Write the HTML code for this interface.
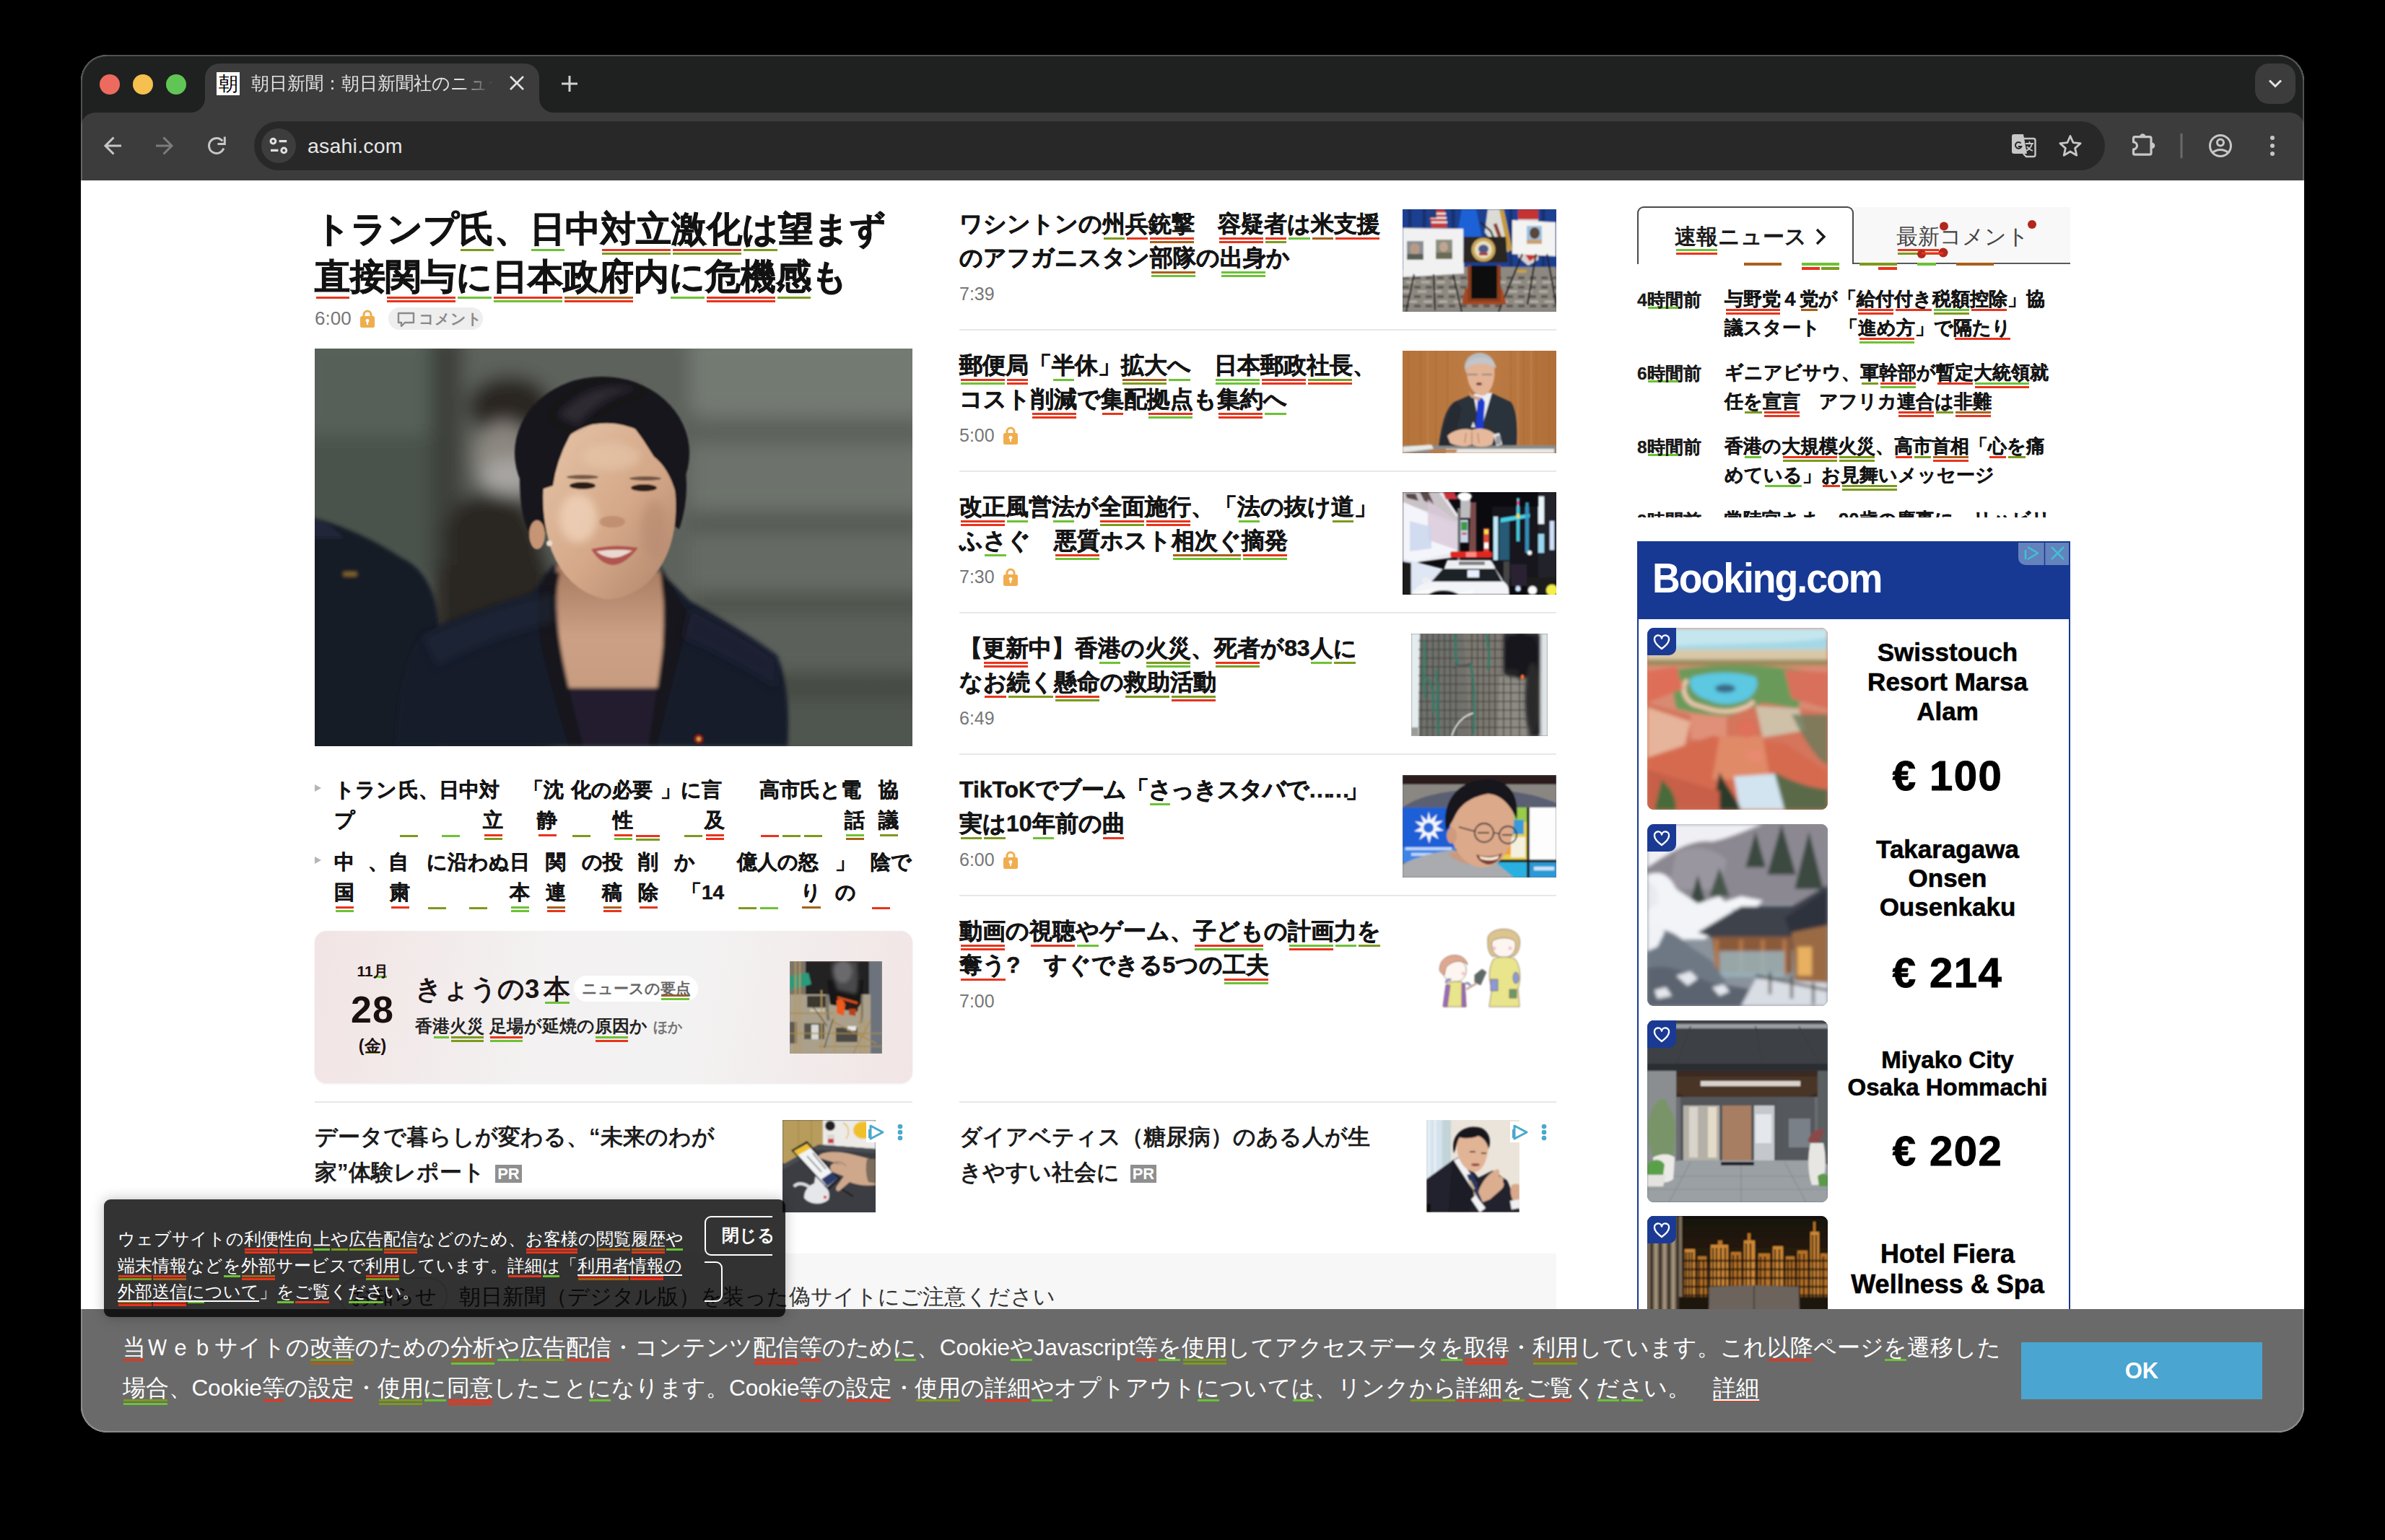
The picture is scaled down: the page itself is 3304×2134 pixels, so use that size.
<!DOCTYPE html>
<html lang="ja">
<head>
<meta charset="utf-8">
<title>asahi</title>
<style>
*{box-sizing:border-box;margin:0;padding:0}
html,body{width:3304px;height:2134px;background:#000;overflow:hidden}
body{font-family:"Liberation Sans",sans-serif;color:#111;position:relative}
.a{position:absolute}
#win{position:absolute;left:0;top:0;width:3304px;height:2134px;clip-path:inset(76px 112px 149px 112px round 36px);background:#fff}
#tabstrip{left:112px;top:76px;width:3080px;height:110px;background:#1f2020}
#toolbar{left:112px;top:156px;width:3080px;height:94px;background:#3c3c3c;border-radius:20px 20px 0 0}
#tab{left:284px;top:88px;width:463px;height:68px;background:#3c3c3c;border-radius:20px 20px 0 0}
.flare{width:20px;height:20px;top:136px;background:radial-gradient(circle at 0 0,#1f2020 19.5px,#3c3c3c 20.5px)}
.tl{width:28px;height:28px;border-radius:50%;top:103px}
#omni{left:352px;top:168px;width:2564px;height:68px;border-radius:34px;background:#282828}
#edge{left:112px;top:76px;width:3080px;height:1909px;border-radius:36px;box-shadow:inset 0 0 0 2px rgba(255,255,255,.22);pointer-events:none}

u{--c1:transparent;--c2:transparent;text-decoration:none;background-image:linear-gradient(var(--c1),var(--c1)),linear-gradient(var(--c2),var(--c2));background-size:calc(100% - 3px) 3.200px,calc(100% - 3px) 3.200px;background-position:50% calc(100% - 5.400px),50% calc(100% - .6px);background-repeat:no-repeat;padding-bottom:10px}
.r{--c1:#e8341c}.g{--c1:#6cc234}.o{--c1:#7c9a1c}.b{--c1:#a86018}
.r2{--c2:#e8341c}.g2{--c2:#6cc234}.o2{--c2:#7c9a1c}.b2{--c2:#a86018}
.lock{display:inline-block;vertical-align:-4px;margin-left:12px}
.hl{-webkit-text-stroke:.55px #141414;font-weight:bold;font-size:31.9px;line-height:47px;white-space:nowrap;color:#141414}
.tm{font-size:25px;color:#767676;line-height:30px;white-space:nowrap}

.sl{-webkit-text-stroke:.45px #141414;left:463px;font-size:28px;line-height:40px;font-weight:bold;white-space:nowrap;color:#141414;width:800px;height:40px}
.sl i{font-style:normal;position:absolute;top:0}
.sl i{margin-left:-463px}
.sl i.m{height:40px}
.sl u{padding-bottom:13px}
.sl i.m u{display:block;height:49px;padding:0}
.pr{display:inline-block;background:#8f8f8f;color:#fff;font-size:22px;line-height:25px;height:25px;padding:0 3px;margin-left:6px;vertical-align:1px;letter-spacing:0}

i.ul{position:absolute;top:2px;height:4px}
.nt{-webkit-text-stroke:.3px #1a1a1a;position:absolute;left:0;font-size:24.500px;line-height:40px;font-weight:bold;white-space:nowrap;color:#1a1a1a}
.nt u{padding-bottom:5px}
.nh{-webkit-text-stroke:.4px #141414;position:absolute;left:121px;font-size:25.600px;line-height:39.600px;font-weight:bold;white-space:nowrap;color:#141414}
.nh u{padding-bottom:9px}

#ck u{padding-bottom:7px}
#pop u{padding-bottom:7px;background-size:calc(100% - 2px) 3px,calc(100% - 2px) 3px;background-position:50% calc(100% - 4px),50% 100%}
.lk{text-decoration:underline;text-decoration-thickness:2px;text-underline-offset:4px}
.j{display:block;text-align:justify;text-align-last:justify;text-justify:inter-character;white-space:nowrap}
.sep{height:2px;background:#e8e8e8}
.th{overflow:hidden}
.th svg{display:block}
</style>
</head>
<body>
<div id="win">
<!-- ===== browser chrome ===== -->
<div class="a" id="tabstrip"></div>
<div class="a" id="toolbar"></div>
<div class="a" id="tab"></div>
<div class="a flare" style="left:264px"></div>
<div class="a flare" style="left:747px;transform:scaleX(-1)"></div>
<div class="a tl" style="left:138px;background:#ed6a5f"></div>
<div class="a tl" style="left:184px;background:#f5c04f"></div>
<div class="a tl" style="left:230px;background:#61c555"></div>
<div class="a" id="omni"></div>
<div class="a" style="left:300px;top:100px;width:32px;height:32px;background:#fff;color:#000;font-family:'Liberation Serif',serif;font-size:27px;line-height:32px;text-align:center;overflow:hidden">朝</div>
<div class="a" style="left:348px;top:99px;width:340px;height:34px;overflow:hidden;white-space:nowrap;font-size:24.5px;line-height:34px;color:#e3e3e3;-webkit-mask-image:linear-gradient(90deg,#000 290px,transparent 335px);mask-image:linear-gradient(90deg,#000 290px,transparent 335px)" id="tabt"><span class="j" style="width:379px">朝日新聞：朝日新聞社のニュース</span></div>
<svg class="a" style="left:112px;top:76px" width="3080" height="174" viewBox="112 76 3080 174" fill="none" stroke="#c7c7c7" stroke-width="3" stroke-linecap="butt" stroke-linejoin="miter">
<path d="M707 106l18 18M725 106l-18 18" stroke="#e3e3e3" stroke-width="2.6"/>
<path d="M778 116h22M789 105v22" stroke="#d0d0d0" stroke-width="3"/>
<path d="M168 202h-22M157.500 190.500L146 202l11.500 11.500"/>
<path d="M216 202h22M226.500 190.500L238 202l-11.500 11.500" stroke="#7c7c7c"/>
<path d="M308.300 195.500A10.500 10.500 0 1 0 309.900 205.600"/><path d="M311.300 189.500v10h-9.800"/>
<circle cx="386" cy="202" r="24" fill="#3d3d3d" stroke="none"/>
<circle cx="378.400" cy="195.600" r="3.400" stroke="#e0e0e0" stroke-width="3"/><path d="M386.600 195.600h10.600" stroke="#e0e0e0" stroke-width="3.200"/>
<circle cx="393.300" cy="208.400" r="3.400" stroke="#e0e0e0" stroke-width="3"/><path d="M375 208.400h10.400" stroke="#e0e0e0" stroke-width="3.200"/>
<rect x="3124" y="88" width="56" height="56" rx="19" fill="#3c3c3c" stroke="none"/>
<path d="M3144 111.500l8 8 8-8" stroke="#e3e3e3" stroke-width="3"/>
<!-- translate -->
<path d="M2790 186h13l5 27h-18a3 3 0 0 1-3-3v-21a3 3 0 0 1 3-3z" fill="#c7c7c7" stroke="none"/>
<path d="M2803 192h14a2.500 2.500 0 0 1 2.500 2.500v20a2.500 2.500 0 0 1-2.500 2.500h-10l-4-4" stroke-width="2.400"/>
<path d="M2806 199h11M2811.500 196v3M2815 199c-1 5-4 8-8 10M2808 203c2 3 5 5 8 6" stroke-width="1.800"/>
<path d="M2799.500 198.500a4.300 4.300 0 1 0 .8 4.500h-4.500" stroke="#282828" stroke-width="2"/>
<!-- star -->
<path d="M2868 188.500l4.100 9.200 10 1-7.500 6.700 2.200 9.800-8.800-5.200-8.800 5.200 2.200-9.800-7.500-6.700 10-1z" stroke-width="2.800" stroke-linejoin="round"/>
<!-- puzzle -->
<path d="M2957.500 189.700h20.500a2 2 0 0 1 2 2v20.500a2 2 0 0 1-2 2h-20.500a2 2 0 0 1-2-2v-5.400a5 5 0 0 0 0-10v-5.100a2 2 0 0 1 2-2z" stroke-width="3.200" stroke-linejoin="round"/><path d="M2964 189.500a4.300 4.300 0 0 1 8.600 0zM2981 197.500a4.300 4.300 0 0 1 0 8.600z" fill="#c7c7c7" stroke="none"/>
<path d="M3022 186v32" stroke="#6a6a6a" stroke-width="3" stroke-linecap="round"/>
<circle cx="3076" cy="202" r="14.500" stroke-width="3"/><circle cx="3076" cy="197.500" r="4.500" stroke-width="3"/><path d="M3065.500 211.500c5-5.500 16-5.500 21 0" stroke-width="3"/>
<g fill="#c7c7c7" stroke="none"><circle cx="3148" cy="191" r="3"/><circle cx="3148" cy="202" r="3"/><circle cx="3148" cy="213" r="3"/></g>
</svg>
<div class="a" style="left:426px;top:182px;font-size:28.5px;line-height:40px;color:#e6e6e6;letter-spacing:.2px">asahi.com</div>
<!--CHROME-ICONS-->
<!-- ===== page ===== -->
<div class="a jx" style="left:436px;top:284px;font-size:49px;line-height:66px;font-weight:bold;white-space:nowrap;color:#121212;-webkit-text-stroke:.9px #121212"><span class="j" style="width:791px">トランプ<u class="o">氏</u>、<u class="g">日</u>中<u class="r o2">対立</u><u class="r o2">激化</u><u class="o">は</u>望まず</span><span class="j" style="width:738px"><u class="r">直</u>接<u class="r r2">関与</u><u class="g">に</u><u class="r g2">日本</u><u class="b r2">政府</u>内<u class="g">に</u><u class="r r2">危機</u><u class="o">感</u>も</span></div>
<div class="a tm" style="left:436px;top:426px;font-size:26px">6:00<svg class="lock" width="20" height="25" viewBox="0 0 20 25"><path d="M5 10V7a5 5 0 0 1 10 0v3" fill="none" stroke="#f0ad4e" stroke-width="3"/><rect x="0" y="9" width="20" height="16" rx="2.500" fill="#f0ad4e"/><circle cx="10" cy="15.500" r="2.400" fill="#fff"/><rect x="9" y="16" width="2" height="5" fill="#fff"/></svg></div>
<div class="a" style="left:538px;top:426px;width:131px;height:31px;border-radius:16px;background:#eeeeee;font-size:21px;line-height:31px;color:#8a8a8a;padding-left:42px;white-space:nowrap;font-weight:bold" id="cmt"><span class="j" style="width:88px">コメント</span></div>
<svg class="a" style="left:550px;top:432px" width="26" height="22" viewBox="0 0 26 22" fill="none" stroke="#8a8a8a" stroke-width="2.400" stroke-linejoin="round"><path d="M2 2h21v13H11l-5 5v-5H2z"/></svg>
<div class="a th" id="p-main" style="left:436px;top:483px;width:828px;height:551px;background:#5d625b"><svg width="828" height="551" viewBox="0 0 828 551">
<defs>
<filter id="b12" x="-10%" y="-10%" width="120%" height="120%"><feGaussianBlur stdDeviation="12"/></filter>
<filter id="b6" x="-10%" y="-10%" width="120%" height="120%"><feGaussianBlur stdDeviation="6"/></filter>
<filter id="b3" x="-10%" y="-10%" width="120%" height="120%"><feGaussianBlur stdDeviation="2.500"/></filter>
<filter id="b1" x="-10%" y="-10%" width="120%" height="120%"><feGaussianBlur stdDeviation="1.200"/></filter>
<linearGradient id="mbg" x1="0" y1="0" x2="0" y2="1"><stop offset="0" stop-color="#6b7169"/><stop offset=".5" stop-color="#666b64"/><stop offset="1" stop-color="#4b504a"/></linearGradient>
<linearGradient id="mface" x1="0" y1="0" x2="1" y2="1"><stop offset="0" stop-color="#e6c4a8"/><stop offset=".55" stop-color="#d4a888"/><stop offset="1" stop-color="#b0846a"/></linearGradient>
<linearGradient id="mneck" x1="0" y1="0" x2="0" y2="1"><stop offset="0" stop-color="#a77a60"/><stop offset=".4" stop-color="#cca084"/><stop offset="1" stop-color="#c2977c"/></linearGradient>
</defs>
<rect width="828" height="551" fill="url(#mbg)"/>
<g filter="url(#b12)">
<rect x="-20" y="-20" width="190" height="300" fill="#566058"/>
<rect x="-20" y="120" width="190" height="200" fill="#4a524b"/>
<rect x="160" y="-20" width="50" height="600" fill="#3d403a"/>
<rect x="205" y="-20" width="330" height="600" fill="#5d625b"/>
<rect x="520" y="-20" width="330" height="110" fill="#737a72"/>
<rect x="520" y="100" width="330" height="34" fill="#5c615b"/>
<rect x="520" y="134" width="330" height="90" fill="#6d736c"/>
<rect x="520" y="226" width="330" height="30" fill="#555a54"/>
<rect x="520" y="256" width="330" height="80" fill="#666b65"/>
<rect x="520" y="338" width="330" height="30" fill="#4d524c"/>
<rect x="520" y="368" width="330" height="80" fill="#5b605a"/>
<rect x="520" y="450" width="330" height="34" fill="#454943"/>
<rect x="520" y="484" width="330" height="90" fill="#50554f"/>
<ellipse cx="270" cy="80" rx="58" ry="42" fill="#2b2522"/>
<ellipse cx="262" cy="150" rx="40" ry="48" fill="#8b8680"/>
<ellipse cx="268" cy="178" rx="36" ry="26" fill="#a8a6a2"/>
<path d="M180 250 Q200 190 260 200 Q330 210 330 400 L180 400z" fill="#2a2622"/>
<rect x="170" y="300" width="160" height="300" fill="#2a2824"/>
</g>
<g filter="url(#b3)">
<path d="M-10 232 Q60 250 120 290 Q165 310 172 380 L172 560 L-10 560z" fill="#191b27"/>
<path d="M-10 232 Q20 240 40 262 L-10 262z" fill="#22263a"/>
<rect x="40" y="310" width="18" height="5" fill="#8a6a2a"/>
</g>
<g filter="url(#b3)">
<path d="M112 551 Q118 430 150 395 Q200 370 300 340 L330 300 L480 310 L520 350 Q600 395 640 425 Q660 470 655 551z" fill="#191b2a"/>
<path d="M335 300 Q330 380 352 470 L372 551 L470 551 L478 470 Q486 380 482 310z" fill="url(#mneck)"/>
<path d="M352 470 L478 470 L474 551 L368 551z" fill="#211f2d"/>
<path d="M318 312 Q300 360 318 430 Q336 500 352 551 L372 551 Q350 470 338 400 Q330 350 340 310z" fill="#13141f"/>
<path d="M478 300 Q500 340 520 372 Q500 440 474 551 L462 551 Q480 440 486 380z" fill="#13141f"/>
</g>
<g filter="url(#b1)">
<ellipse cx="398" cy="145" rx="121" ry="106" fill="#16131a"/>
<path d="M285 150 Q280 230 300 260 L330 250 L320 150z" fill="#16131a"/>
<path d="M505 130 Q525 190 505 250 L488 240 L490 140z" fill="#16131a"/>
<path d="M318 180 Q330 120 385 105 Q450 95 490 150 Q505 200 498 250 Q490 300 455 330 Q425 350 400 347 Q350 335 328 280 Q312 230 318 180z" fill="url(#mface)"/>
<path d="M330 190 Q340 120 400 60 Q440 100 470 150 Q490 165 500 200 Q505 120 440 50 L370 45 Q300 80 300 200z" fill="#16131a"/>
<ellipse cx="308" cy="258" rx="11" ry="20" fill="#c69576"/>
<ellipse cx="371" cy="190" rx="18" ry="5" fill="#2a1a16"/>
<ellipse cx="456" cy="193" rx="18" ry="5" fill="#2a1a16"/>
<ellipse cx="371" cy="178" rx="22" ry="3" fill="#4a3328" opacity=".7"/>
<ellipse cx="458" cy="180" rx="22" ry="3" fill="#4a3328" opacity=".7"/>
<path d="M383 278 Q415 270 448 276 Q430 300 412 300 Q395 298 383 278z" fill="#b0544f"/>
<path d="M390 281 Q415 277 440 280 Q425 290 412 290 Q400 289 390 281z" fill="#ead9d0"/>
<ellipse cx="412" cy="240" rx="18" ry="8" fill="#b98468" opacity=".7"/>
<circle cx="325" cy="270" r="4" fill="#e8e0d0"/>
<g filter="url(#b6)"><ellipse cx="365" cy="235" rx="26" ry="34" fill="#f0d4bc" opacity=".75"/><ellipse cx="410" cy="150" rx="40" ry="18" fill="#e8c8ac" opacity=".6"/><ellipse cx="470" cy="250" rx="18" ry="40" fill="#b88a70" opacity=".6"/><path d="M335 92 Q385 38 450 56 Q400 64 364 108z" fill="#34303a" opacity=".8"/><path d="M150 400 Q260 350 330 340 L330 380 Q240 400 170 440z" fill="#262b40" opacity=".45"/><path d="M520 360 Q600 400 640 430 L640 470 Q580 430 510 400z" fill="#262b40" opacity=".4"/></g>
<circle cx="532" cy="541" r="7" fill="#8a1f1a"/><circle cx="532" cy="541" r="3" fill="#c9a040"/>
</g>
</svg></div>
<!-- sub links (layout broken by extension in the original) -->
<div class="a" style="left:436px;top:1087px;width:0;height:0;border-left:9px solid #b5b5b5;border-top:5.500px solid transparent;border-bottom:5.500px solid transparent"></div>
<div class="a" style="left:436px;top:1187px;width:0;height:0;border-left:9px solid #b5b5b5;border-top:5.500px solid transparent;border-bottom:5.500px solid transparent"></div>
<div class="a sl" style="top:1075px">トラン<i style="left:552px"><span class="j" style="width:140px">氏、日中対</span></i><i style="left:725px"><span class="j" style="width:56px">「沈</span></i><i style="left:791px"><span class="j" style="width:113px">化の必要</span></i><i style="left:915px"><span class="j" style="width:85px">」に言</span></i><i style="left:1052px"><span class="j" style="width:141px">高市氏と電</span></i><i style="left:1217px"><span class="j" style="width:28px">協</span></i></div>
<div class="a sl" style="top:1117px">プ<i class="m" style="left:552px;width:28px" ><u class="o"></u></i><i class="m" style="left:610px;width:28px"><u class="g"></u></i><i style="left:669px"><span class="j" style="width:28px"><u class="r o2">立</u></span></i><i style="left:744px"><span class="j" style="width:28px"><u class="r">静</u></span></i><i class="m" style="left:791px;width:28px"><u class="o"></u></i><i style="left:849px"><span class="j" style="width:28px"><u class="r g2">性</u></span></i><i class="m" style="left:879px;width:36px"><u class="r o2"></u></i><i class="m" style="left:946px;width:28px"><u class="o"></u></i><i style="left:976px"><span class="j" style="width:28px"><u class="r r2">及</u></span></i><i class="m" style="left:1052px;width:28px"><u class="r"></u></i><i class="m" style="left:1082px;width:28px"><u class="o"></u></i><i class="m" style="left:1112px;width:28px"><u class="o"></u></i><i style="left:1170px"><span class="j" style="width:28px"><u class="g b2">話</u></span></i><i style="left:1217px"><span class="j" style="width:28px"><u class="o">議</u></span></i></div>
<div class="a sl" style="top:1175px">中<i style="left:510px"><span class="j" style="width:56px">、自</span></i><i style="left:591px"><span class="j" style="width:143px">に沿わぬ日</span></i><i style="left:756px"><span class="j" style="width:28px">関</span></i><i style="left:806px"><span class="j" style="width:57px">の投</span></i><i style="left:884px"><span class="j" style="width:28px">削</span></i><i style="left:934px"><span class="j" style="width:29px">か</span></i><i style="left:1021px"><span class="j" style="width:113px">億人の怒</span></i><i style="left:1157px"><span class="j" style="width:28px">」</span></i><i style="left:1206px"><span class="j" style="width:57px">陰で</span></i></div>
<div class="a sl" style="top:1217px"><u class="r g2">国</u><i style="left:540px"><span class="j" style="width:28px"><u class="r">粛</u></span></i><i class="m" style="left:591px;width:28px"><u class="o"></u></i><i class="m" style="left:648px;width:28px"><u class="o"></u></i><i style="left:706px"><span class="j" style="width:28px"><u class="g g2">本</u></span></i><i style="left:756px"><span class="j" style="width:28px"><u class="b r2">連</u></span></i><i style="left:834px"><span class="j" style="width:28px"><u class="b r2">稿</u></span></i><i style="left:884px"><span class="j" style="width:28px"><u class="r">除</u></span></i><i style="left:944px"><span class="j" style="width:59.2px">「14</span></i><i class="m" style="left:1021px;width:28px"><u class="o"></u></i><i class="m" style="left:1051px;width:28px"><u class="g"></u></i><i style="left:1109px"><span class="j" style="width:29px"><u class="b">り</u></span></i><i style="left:1157px"><span class="j" style="width:29px">の</span></i><i class="m" style="left:1206px;width:28px"><u class="r"></u></i></div>
<!-- kyou no 3 bon -->
<div class="a" style="left:436px;top:1290px;width:828px;height:211px;border-radius:16px;background:linear-gradient(100deg,#f2e4e4 0%,#f3f1f1 38%,#f3f2f2 62%,#f2e5e5 100%);box-shadow:0 1px 3px rgba(0,0,0,.08)"></div>
<div class="a" style="left:466px;top:1330px;width:100px;text-align:center;font-weight:bold;color:#1a1010">
<div style="font-size:21px;line-height:32px">11<u class="g" style="padding-bottom:4px">月</u></div>
<div style="font-size:52px;line-height:70px;margin-top:2px;letter-spacing:1px">28</div>
<div style="font-size:23px;line-height:32px;margin-top:-1px">(<u class="o" style="padding-bottom:4px">金</u>)</div>
</div>
<div class="a jx" style="left:575px;top:1343px;font-size:36.500px;line-height:56px;font-weight:bold;white-space:nowrap;color:#1a1414"><span class="j" style="width:215.4px">きょうの3<u class="g" style="padding-bottom:6px;margin-left:6px">本</u></span></div>
<div class="a" style="left:795px;top:1352px;width:172px;height:36px;border-radius:18px;background:#fff;font-size:20.500px;line-height:36px;font-weight:bold;color:#666;text-align:center;white-space:nowrap">ニュースの<u class="b g2" style="padding-bottom:6px">要点</u></div>
<div class="a jx" style="left:575px;top:1404px;font-size:23.800px;line-height:36px;font-weight:bold;white-space:nowrap;color:#222"><span class="j" style="width:370.3px">香<u class="g">港</u><u class="o o2">火災</u> <u class="r g2">足場</u>が延焼の<u class="g r2">原因</u>か <span style="font-size:20px;color:#777;margin-left:2px">ほか</span></span></div>
<div class="a th" id="p-fire2" style="left:1094px;top:1332px;width:128px;height:128px;background:#6d675d"><svg width="128" height="128" viewBox="0 0 128 128">
<rect width="128" height="128" fill="#a79d8a"/>
<g filter="url(#b1)">
<rect x="0" y="0" width="112" height="46" fill="#202022"/>
<rect x="110" y="0" width="18" height="128" fill="#6d737c"/>
<path d="M0 0h22v46H0z" fill="#7a7466"/>
<path d="M0 20l26-4 4 16-30 8z" fill="#2c9a7c"/>
<path d="M0 60l14-6 2 6-16 8z" fill="#d0603a"/>
<path d="M52 26h50l-2 36-12 4-30-6z" fill="#161616"/>
<path d="M0 46h112v82H0z" fill="#aaa08c"/>
<path d="M52 46c2 12-2 22 2 36M100 46c-2 14 2 24-2 40" stroke="#5a564e" stroke-width="4" opacity=".6"/>
<rect x="24" y="48" width="26" height="16" fill="#3a3833"/><rect x="28" y="66" width="20" height="4" fill="#c9c3b4"/>
<rect x="20" y="86" width="28" height="22" fill="#55524a"/><rect x="30" y="88" width="10" height="20" fill="#d9d9d6"/>
<rect x="64" y="92" width="30" height="20" fill="#4c4a44"/><rect x="80" y="90" width="12" height="6" fill="#e8e8e8"/>
<rect x="0" y="84" width="10" height="30" fill="#5c5a54"/>
<path d="M52 28h48l-2 34-10 4-32-6z" fill="#171717"/>
<path d="M64 52h18l14 6-2 12-28-4z" fill="#2a1a14"/>
<path d="M65 54c6-4 10 0 12 6l-2 16-10-4z" fill="#ee5a1c"/>
<path d="M82 66h10l-1 10-9-2z" fill="#b8401c"/>
<path d="M66 50l28 8" stroke="#d8501e" stroke-width="3"/>
<path d="M8 0v128M14 0v128M44 40v88M62 70v58M98 60v68M104 80v48" stroke="#b89a5a" stroke-width="1.800"/>
<path d="M0 72h60M0 100h128M40 118h88M60 84l60 30M88 128l24-46" stroke="#a88a4a" stroke-width="1.600"/>
<path d="M60 80l-12 40M30 60l22 30" stroke="#3a3a36" stroke-width="1.200"/>
</g>
<g filter="url(#b3)"><path d="M60 0c-6 14 2 26 6 40l26 6c6-16 0-30 2-46z" fill="#4a4a4c"/><ellipse cx="74" cy="14" rx="12" ry="16" fill="#6a6a6c"/></g>
</svg></div>
<div class="a sep" style="left:436px;top:1526px;width:828px"></div>
<div class="a sep" style="left:1329px;top:1526px;width:827px"></div>
<div class="a jx" style="left:436px;top:1551px;font-size:31px;line-height:49px;font-weight:bold;white-space:nowrap;color:#1c1c1c"><span class="j" style="width:553.5px">データで暮らしが変わる、“未来のわが</span><span class="j" style="width:286.7px">家”体験レポート <span class="pr">PR</span></span></div>
<div class="a th" id="p-ad1" style="left:1084px;top:1552px;width:129px;height:128px;background:#555"><svg width="129" height="128" viewBox="0 0 129 128">
<rect width="129" height="128" fill="#3b3e43"/>
<g filter="url(#b1)">
<rect width="58" height="60" fill="#b79c5c"/>
<path d="M22 0v50M40 0v44" stroke="#a88c4c" stroke-width="1.500"/>
<rect x="56" width="73" height="44" fill="#ecebe8"/>
<circle cx="66" cy="8" r="7" fill="#222"/>
<rect x="62" y="20" width="10" height="18" fill="#d8d8d6"/><rect x="63" y="26" width="8" height="6" fill="#d03a3a"/>
<ellipse cx="112" cy="14" rx="14" ry="12" fill="#f0c02a"/>
<path d="M84 4c8 4 10 14 4 22" stroke="#e8b84a" stroke-width="1.500" fill="none"/>
<path d="M0 62l50-28 79 6v88H0z" fill="#3a3d42"/>
<path d="M0 62l50-28 79 6v6l-79-5-50 28z" fill="#4a4d52"/>
<!-- stand -->
<path d="M30 108c0-12 8-18 14-20l4-24 12 2-2 26c6 4 8 10 6 18-8 8-26 8-34-2z" fill="#e6e7ea"/>
<path d="M16 92c6-6 16-4 22 2" stroke="#e0e0e4" stroke-width="4" fill="none"/>
<circle cx="59" cy="107" r="2.200" fill="#e8302a"/>
<!-- phone -->
<path d="M12 42l22-13 46 52-16 16z" fill="#1c1d22"/>
<path d="M16 43l18-10 42 48-14 12z" fill="#f2f4f6"/>
<path d="M16 43l18-10 5 6-18 10z" fill="#f0c02a"/>
<path d="M54 82l15-10 7 9-14 11z" fill="#2a3a6a"/>
<path d="M34 50l20 22M42 46l18 22" stroke="#555" stroke-width="1.200"/>
<path d="M76 92l22 14" stroke="#222" stroke-width="2.500"/>
<!-- hand -->
<path d="M52 48c10-6 30-4 46 0l31 8v34c-12 2-26 0-36-4l-14 12c-4 2-6-2-4-6l10-14-16-6c-6-6-2-12 4-12l10 2-28-8c-6-2-6-4-3-6z" fill="#cfa88c"/>
<path d="M70 60c6-4 14-2 18 4" stroke="#a8806a" stroke-width="1.500" fill="none"/>
<path d="M117 54h12v34l-10-2c-4-10-4-22-2-32z" fill="#7c6c5c"/>
</g></svg></div>
<div class="a jx" style="left:1329px;top:1551px;font-size:31px;line-height:49px;font-weight:bold;white-space:nowrap;color:#1c1c1c"><span class="j" style="width:569px">ダイアベティス（糖尿病）のある人が生</span><span class="j" style="width:273.2px">きやすい社会に <span class="pr">PR</span></span></div>
<div class="a th" id="p-ad2" style="left:1976px;top:1552px;width:129px;height:128px;background:#ccd"><svg width="129" height="128" viewBox="0 0 129 128">
<rect width="129" height="128" fill="#ebe4da"/>
<g filter="url(#b1)">
<rect width="34" height="128" fill="#d4e2ec"/><rect x="22" width="12" height="128" fill="#c2d4d8"/>
<path d="M4 0v128M12 0v128" stroke="#e8f0f8" stroke-width="3"/>
<!-- suit -->
<path d="M0 82l36-26 12-6 24 30 20-10 20 14 17 40v4H0z" fill="#23242f"/>
<path d="M38 56l8-4 24 36-6 8z" fill="#f2f2f4"/>
<path d="M56 76l8-2 14 34-8 4z" fill="#2a3560"/><path d="M60 84l6 12M64 98l6 10" stroke="#c9b48a" stroke-width="3"/>
<path d="M36 56l30 44-6 28H30z" fill="#1d1e28"/>
<rect x="0" y="116" width="6" height="12" fill="#111"/>
<!-- head -->
<path d="M42 34c0-20 14-26 28-24 14 2 18 14 16 28-2 18-8 32-18 34-14 0-26-16-26-38z" fill="#e2b496"/>
<path d="M38 46c-6-30 20-42 40-34 10 6 12 18 8 28-2-10-8-16-14-18-8 4-20 4-26 2-4 6-4 14-8 22z" fill="#17151a"/>
<path d="M60 44h8M76 46h7" stroke="#3a2a24" stroke-width="1.800"/>
<ellipse cx="68" cy="62" rx="6" ry="2" fill="#9a4a40"/>
<!-- hands -->
<path d="M72 100c4-14 14-26 26-32 4 2 4 6 2 10 4 0 8 2 6 8 2 2 2 6-2 10l-16 14-10 4z" fill="#dcae90"/>
<path d="M68 104l14 18-8 6-12-18z" fill="#f4f4f6"/>
<path d="M118 90c4-2 8-2 11 0v22l-8 2c-4-8-6-16-3-24z" fill="#d9a88c"/>
<path d="M116 112l13-2v12l-11 2z" fill="#f0f0f2"/>
</g></svg></div>
<svg class="a" style="left:1198px;top:1552px" width="70" height="34" viewBox="0 0 70 34"><rect x="2" y="2" width="14" height="29" fill="#fff"/><path d="M8 8l17 9-17 9z" fill="#fff" stroke="#4aa8cc" stroke-width="3" stroke-linejoin="round"/><path d="M6.500 13v12" stroke="#4aa8cc" stroke-width="3"/><g fill="#4aa8cc"><circle cx="49" cy="9" r="3.300"/><circle cx="49" cy="17" r="3.300"/><circle cx="49" cy="25" r="3.300"/></g></svg>
<svg class="a" style="left:2090px;top:1552px" width="70" height="34" viewBox="0 0 70 34"><rect x="2" y="2" width="14" height="29" fill="#fff"/><path d="M8 8l17 9-17 9z" fill="#fff" stroke="#4aa8cc" stroke-width="3" stroke-linejoin="round"/><path d="M6.500 13v12" stroke="#4aa8cc" stroke-width="3"/><g fill="#4aa8cc"><circle cx="49" cy="9" r="3.300"/><circle cx="49" cy="17" r="3.300"/><circle cx="49" cy="25" r="3.300"/></g></svg>

<div class="a" style="left:436px;top:1737px;width:1720px;height:80px;background:#f7f7f7"></div>
<div class="a" style="left:470px;top:1770px;width:150px;height:52px;border-radius:26px;border:2px solid #ddd;font-size:29px;line-height:48px;text-align:center;color:#333;white-space:nowrap">お知らせ</div>
<div class="a jx" style="left:636px;top:1775px;font-size:30px;line-height:44px;color:#333;white-space:nowrap"><span class="j" style="width:826px">朝日新聞（デジタル版）を装った偽サイトにご注意ください</span></div>
<div class="a hl jx" style="left:1329px;top:287px"><span class="j" style="width:583px">ワシントンの<u class="o">州</u><u class="r">兵</u><u class="r b2">銃撃</u>　<u class="r r2">容疑</u><u class="r o2">者</u><u class="g">は</u><u class="b">米</u><u class="r">支援</u></span><span class="j" style="width:458px">のアフガニスタン<u class="b g2">部隊</u>の<u class="g g2">出身</u>か</span></div>
<div class="a tm" style="left:1329px;top:392px">7:39</div>
<div class="a sep" style="left:1329px;top:456px;width:827px"></div>
<div class="a hl jx" style="left:1329px;top:483px"><span class="j" style="width:577px"><u class="r g2">郵便</u><u class="r r2">局</u>「<u class="g">半</u>休」<u class="b o2">拡大</u><u class="g">へ</u>　<u class="g g2">日本</u><u class="r r2">郵政</u><u class="o r2">社長</u>、</span><span class="j" style="width:454px">コスト<u class="r r2">削減</u>で<u class="r">集</u>配<u class="r g2">拠点</u>も<u class="r r2">集約</u><u class="g">へ</u></span></div>
<div class="a tm" style="left:1329px;top:588px">5:00<svg class="lock" width="20" height="25" viewBox="0 0 20 25"><path d="M5 10V7a5 5 0 0 1 10 0v3" fill="none" stroke="#f0ad4e" stroke-width="3"/><rect x="0" y="9" width="20" height="16" rx="2.500" fill="#f0ad4e"/><circle cx="10" cy="15.500" r="2.400" fill="#fff"/><rect x="9" y="16" width="2" height="5" fill="#fff"/></svg></div>
<div class="a sep" style="left:1329px;top:652px;width:827px"></div>
<div class="a hl jx" style="left:1329px;top:679px"><span class="j" style="width:579px"><u class="r r2">改正</u><u class="g">風</u>営<u class="g">法</u>が<u class="r o2">全面</u><u class="r r2">施行</u>、「<u class="g">法</u>の抜け<u class="o">道</u>」</span><span class="j" style="width:455px">ふ<u class="g">さ</u>ぐ　<u class="r g2">悪質</u>ホスト<u class="b g2">相次ぐ</u><u class="r g2">摘発</u></span></div>
<div class="a tm" style="left:1329px;top:784px">7:30<svg class="lock" width="20" height="25" viewBox="0 0 20 25"><path d="M5 10V7a5 5 0 0 1 10 0v3" fill="none" stroke="#f0ad4e" stroke-width="3"/><rect x="0" y="9" width="20" height="16" rx="2.500" fill="#f0ad4e"/><circle cx="10" cy="15.500" r="2.400" fill="#fff"/><rect x="9" y="16" width="2" height="5" fill="#fff"/></svg></div>
<div class="a sep" style="left:1329px;top:848px;width:827px"></div>
<div class="a hl jx" style="left:1329px;top:875px"><span class="j" style="width:550.5px">【<u class="r r2">更新</u>中】香<u class="g">港</u>の<u class="o g2">火災</u>、<u class="r o2">死者</u>が83<u class="g">人</u><u class="o">に</u></span><span class="j" style="width:356px">な<u class="r">お</u><u class="o">続く</u><u class="r o2">懸命</u>の<u class="o">救助</u><u class="o r2">活動</u></span></div>
<div class="a tm" style="left:1329px;top:980px">6:49</div>
<div class="a sep" style="left:1329px;top:1044px;width:827px"></div>
<div class="a hl jx" style="left:1329px;top:1071px"><span class="j" style="width:566.1px">TikToK<span style="letter-spacing:-1.3px">でブーム「<u class="g">さ</u>っきスタバで<span style="letter-spacing:-6px">……</span>」</span></span><span class="j" style="width:229.5px"><u class="o">実</u><u class="o">は</u>10<u class="g">年</u>前の<u class="r">曲</u></span></div>
<div class="a tm" style="left:1329px;top:1176px">6:00<svg class="lock" width="20" height="25" viewBox="0 0 20 25"><path d="M5 10V7a5 5 0 0 1 10 0v3" fill="none" stroke="#f0ad4e" stroke-width="3"/><rect x="0" y="9" width="20" height="16" rx="2.500" fill="#f0ad4e"/><circle cx="10" cy="15.500" r="2.400" fill="#fff"/><rect x="9" y="16" width="2" height="5" fill="#fff"/></svg></div>
<div class="a sep" style="left:1329px;top:1240px;width:827px"></div>
<div class="a hl jx" style="left:1329px;top:1267px"><span class="j" style="width:584px"><u class="r r2">動画</u>の<u class="r">視聴</u><u class="g">や</u>ゲーム、<u class="r g2">子ども</u>の<u class="g r2">計画</u><u class="g">力</u><u class="o">を</u></span><span class="j" style="width:429.3px"><u class="r">奪う</u>?　すぐできる5つの<u class="r g2">工夫</u></span></div>
<div class="a tm" style="left:1329px;top:1372px">7:00</div>
<div class="a th" id="p-t1" style="left:1943px;top:290px;width:213px;height:142px;background:#6b6f80"><svg width="213" height="142" viewBox="0 0 213 142">
<rect width="213" height="84" fill="#1d3f8e"/>
<g filter="url(#b1)">
<path d="M0 0h213v84H0z" fill="#1e4191"/>
<path d="M10 0v84M30 0v84M70 0v84M150 0v84M195 0v84" stroke="#17336f" stroke-width="5"/>
<rect y="80" width="213" height="62" fill="#8d8880"/>
<path d="M0 95h213M0 108h213M0 121h213M0 134h213" stroke="#5f5b56" stroke-width="4" stroke-dasharray="9 7"/>
<path d="M5 101h213M0 114h213M8 128h213" stroke="#b5b0a8" stroke-width="3" stroke-dasharray="12 9"/>
<!-- flags -->
<path d="M36 0h22l4 26H40z" fill="#c43a3a"/><path d="M38 6h22M39 12h22M40 18h22" stroke="#eee" stroke-width="2.500"/><rect x="36" y="0" width="11" height="12" fill="#283a7a"/>
<path d="M82 0h20l8 40-12 4-22-10z" fill="#1f62d6"/>
<path d="M118 0h22l12 56-14 6-24-30z" fill="#dcdcd6"/><path d="M140 0l12 56-6 3-12-59z" fill="#c79a3a"/><path d="M128 20l8 22" stroke="#8a3a2a" stroke-width="5"/>
<path d="M160 0h28v70l-14 8-14-12z" fill="#d9d3d0"/><path d="M160 0h28v14h-28zM160 28h28v12h-28zM164 54h24v10l-12 8z" fill="#c53030"/>
<!-- boards -->
<path d="M0 26l84 1 1 62-85 5z" fill="#f1f1f1"/>
<path d="M152 15l60 3v47l-60-3z" fill="#f3f3f1"/>
<rect x="6" y="44" width="23" height="26" fill="#8a8d92"/><ellipse cx="17" cy="55" rx="7" ry="8" fill="#b59a88"/><rect x="6" y="62" width="23" height="8" fill="#595e55"/>
<rect x="46" y="42" width="23" height="27" fill="#8b8e80"/><ellipse cx="57" cy="52" rx="6" ry="7" fill="#c0a590"/><rect x="46" y="60" width="23" height="9" fill="#6a6b55"/>
<rect x="172" y="23" width="21" height="25" fill="#9cc0e0"/><ellipse cx="183" cy="33" rx="7" ry="8" fill="#5a4638"/><rect x="172" y="42" width="21" height="6" fill="#c9a070"/>
<!-- easel legs -->
<path d="M16 90L5 142M43 90l2 50M70 90l12 52M166 62l-33 80M185 62l-12 70M200 62l13 70" stroke="#1a1a1a" stroke-width="2.200"/>
<!-- podium -->
<path d="M82 132l4-22h52l6 22z" fill="#a54a22"/>
<path d="M90 128V78h46v50z" fill="#8c3c1a"/>
<rect x="95" y="78" width="36" height="46" fill="#0a0a0c"/>
<path d="M85 38h58l3 36H84z" fill="#2a2623"/>
<circle cx="112" cy="56" r="16.500" fill="#c9a85a"/><circle cx="112" cy="56" r="12" fill="#e9dfc0"/><ellipse cx="112" cy="55" rx="7" ry="6" fill="#4a5a8a"/><path d="M106 60h12v4h-12z" fill="#b03a3a"/>
<path d="M108 18l14 12 6 14" stroke="#222" stroke-width="2.500" fill="none"/>
<rect x="158" y="84" width="14" height="4" rx="2" fill="#c9a23a"/>
</g></svg></div>
<div class="a th" id="p-t2" style="left:1943px;top:486px;width:213px;height:142px;background:#b5763f"><svg width="213" height="142" viewBox="0 0 213 142">
<defs><linearGradient id="wood" x1="0" y1="0" x2="1" y2="0"><stop offset="0" stop-color="#b5733c"/><stop offset=".5" stop-color="#bd7c44"/><stop offset="1" stop-color="#b06f3a"/></linearGradient></defs>
<rect width="213" height="142" fill="url(#wood)"/>
<g filter="url(#b1)">
<path d="M8 0v142M25 0v142M46 0v142M62 0v142M150 0v142M168 0v142M185 0v142M203 0v142" stroke="#a96a35" stroke-width="1.500" opacity=".7"/>
<path d="M35 0v142M160 0v142M178 0v142" stroke="#c58a52" stroke-width="2" opacity=".6"/>
<rect y="131" width="213" height="11" fill="#8a8a88"/>
<path d="M0 133l40-3 3 6-43 5zM60 136h150v6H60z" fill="#e8e8e6"/>
<path d="M36 137h40l-2 4H38z" fill="#c07a2a"/>
<!-- body -->
<path d="M50 132c4-30 10-56 24-62l26-11 24 0 26 12c8 10 10 40 8 60z" fill="#2c303a"/>
<path d="M98 60l10 52 16-54z" fill="#eef0f4"/>
<path d="M104 68l6-3 4 6-3 46-6 5-4-8z" fill="#1a3bd0"/>
<path d="M74 70c-10 10-18 40-22 60l20 2c2-20 6-40 10-52z" fill="#262a33"/>
<!-- head -->
<ellipse cx="107" cy="22" rx="21" ry="19" fill="#b9bcc0"/>
<path d="M89 28c0-14 36-16 38-2 2 14-4 32-14 36-12 2-24-12-24-34z" fill="#e2b395"/>
<path d="M86 24c2-18 40-22 44 0-10-8-30-8-44 0z" fill="#c2c5c9"/>
<path d="M90 33h14M110 33h14" stroke="#777" stroke-width="1.500"/>
<ellipse cx="106" cy="46" rx="4" ry="2" fill="#7a3a30"/>
<path d="M92 56c4 6 10 8 16 8l-2 6-12-6z" fill="#cfa084"/>
<!-- hands -->
<path d="M62 118c8-8 24-12 34-8 10-4 24-2 32 6l-4 14c-10 4-20 4-28 0-10 4-22 2-30-2z" fill="#e6b99c"/>
<path d="M96 112v18M88 114l-2 14M104 114l2 14" stroke="#b98a70" stroke-width="1.500"/>
<path d="M126 116l8-2 4 16-8 2z" fill="#e8e8ea"/><rect x="129" y="118" width="7" height="12" rx="2" fill="#9a9da2"/>
<path d="M95 106l3-8 3 8z" fill="#dfe3ee"/>
</g></svg></div>
<div class="a th" id="p-t3" style="left:1943px;top:682px;width:213px;height:142px;background:#555"><svg width="213" height="142" viewBox="0 0 213 142">
<rect width="213" height="142" fill="#0b0b0f"/>
<g filter="url(#b1)">
<!-- left billboards -->
<path d="M0 0h56l20 30v60L0 100z" fill="#e9eaf0"/>
<path d="M0 0h50l26 36-2 6L0 14z" fill="#c9c2c6"/><path d="M4 2h14l4 10-16-4zM24 0h12l8 18-14-6z" fill="#5a4a48"/>
<path d="M2 14l72 34v34L2 100z" fill="#f4f5fa"/>
<path d="M35 10l40 30v40l-40-14z" fill="#d9c8d8" opacity=".8"/>
<path d="M10 40l30 8v30l-30 4z" fill="#c9d6ee" opacity=".8"/>
<path d="M0 92l55 14v36H0z" fill="#dfe6f4"/>
<path d="M0 96l12 2v44H0z" fill="#1a1a1e"/>
<path d="M56 0h16l4 10H60z" fill="#c8323a"/>
<!-- pole + P sign -->
<rect x="76" y="22" width="3.500" height="78" fill="#777"/>
<rect x="80" y="8" width="14" height="28" fill="#bcbcc0"/>
<rect x="80" y="38" width="11" height="32" fill="#c8d4e8"/><rect x="81" y="41" width="9" height="12" fill="#3a9a4a"/><rect x="82" y="56" width="7" height="3" fill="#d03a3a"/>
<path d="M94 14h8v70h-10z" fill="#7a4a48"/>
<ellipse cx="86" cy="6" rx="10" ry="6" fill="#fff"/>
<!-- right buildings -->
<rect x="124" y="20" width="64" height="100" fill="#17191f"/>
<rect x="188" y="0" width="25" height="120" fill="#22242a"/>
<rect x="112" y="50" width="8" height="40" fill="#e04a3a"/><rect x="113" y="52" width="6" height="6" fill="#f4e050"/><rect x="113" y="70" width="6" height="8" fill="#fff"/>
<rect x="126" y="34" width="6" height="60" fill="#bfe8f8"/>
<rect x="134" y="40" width="14" height="54" fill="#2a6a8a" opacity=".8"/>
<path d="M136 36l40-6v5l-40 7z" fill="#4ad0e8"/>
<rect x="158" y="8" width="4" height="60" fill="#4ac8e0"/><rect x="158" y="12" width="4" height="6" fill="#e84a8a"/><rect x="158" y="30" width="4" height="6" fill="#f0e04a"/>
<rect x="170" y="14" width="5" height="70" fill="#3a9ac8" opacity=".9"/>
<rect x="188" y="6" width="8" height="38" fill="#e8f4fa"/><rect x="188" y="58" width="8" height="26" fill="#9ad8f0"/>
<rect x="204" y="40" width="6" height="40" fill="#cfe0f8"/>
<rect x="140" y="96" width="8" height="40" fill="#444"/><circle cx="176" cy="84" r="3" fill="#fff"/>
<circle cx="163" cy="104" r="3" fill="#e8304a"/>
<rect x="150" y="100" width="22" height="30" fill="#2a2030"/>
<!-- street bottom right -->
<rect x="172" y="118" width="41" height="24" fill="#1a1a1a"/>
<circle cx="180" cy="136" r="6" fill="#fff"/><circle cx="207" cy="136" r="8" fill="#f4f04a"/><circle cx="160" cy="134" r="4" fill="#cfe4ff"/>
<!-- police car -->
<path d="M12 142c6-12 20-18 36-22l12-18h66l14 22c6 4 8 10 8 18z" fill="#f2f4f8"/>
<path d="M58 104l4-10h60l6 10z" fill="#eceef2"/>
<rect x="78" y="96" width="36" height="5" fill="#333" opacity=".6"/>
<rect x="66" y="82" width="58" height="9" rx="3" fill="#e02820"/><rect x="88" y="83" width="14" height="7" fill="#ff8a80"/>
<path d="M40 124l16-18h72l10 18z" fill="#1d2026"/>
<rect x="90" y="108" width="16" height="10" fill="#e8f0ff"/>
<path d="M14 142c8-6 22-8 36-8l22 6 26-4v6z" fill="#fafafa"/>
<path d="M36 142c10-8 30-8 42 0z" fill="#15151a"/>
<ellipse cx="32" cy="122" rx="6" ry="4" fill="#eee"/>
</g></svg></div>
<div class="a th" id="p-t4" style="left:1955px;top:878px;width:189px;height:142px;background:#777"><svg width="189" height="142" viewBox="0 0 189 142">
<rect width="189" height="142" fill="#73716c"/>
<g filter="url(#b1)">
<rect width="12" height="142" fill="#e4ecee"/>
<rect x="176" width="13" height="142" fill="#dfe5e6"/>
<path d="M12 0h60l4 48-10 94H10z" fill="#6f716c"/>
<path d="M72 0h58v62l-8 80H80l-4-94z" fill="#7b7871"/>
<path d="M122 60l22-4 16 6v80h-40z" fill="#8d8a83"/>
<path d="M14 0v142M22 0v142M30 0v142M38 0v142M46 0v142M54 0v142M62 0v142M84 0v142M92 0v142M100 0v142M108 0v142M116 0v142M128 60v82M138 58v84M150 60v82" stroke="#3d3d3b" stroke-width="1.600" opacity=".75"/>
<path d="M10 10h120M10 22h120M10 34h120M10 46h120M10 58h120M10 70h150M10 82h150M10 94h150M10 106h150M10 118h150M10 130h150" stroke="#45443f" stroke-width="2" opacity=".6"/>
<path d="M18 10c2 30-4 50 2 80M34 50c6 30 0 60 4 90M60 0c4 20-2 30 6 46M82 40c4 20 8 50 4 100M104 0c2 16 6 30 2 50M20 60c10 6 12 30 10 50" stroke="#2f7d68" stroke-width="3.500" fill="none" opacity=".85"/>
<path d="M58 48c8-6 16-2 24-6" stroke="#555" stroke-width="3" fill="none"/>
<!-- smoke -->
</g>
<g filter="url(#b3)">
<path d="M128 0h50v142h-14V60l-20-6-16 2z" fill="#1f1f21"/>
<ellipse cx="152" cy="30" rx="24" ry="32" fill="#19191b"/>
<ellipse cx="168" cy="90" rx="10" ry="50" fill="#2a2a2c"/>
<ellipse cx="140" cy="54" rx="10" ry="6" fill="#222"/>
</g>
<g filter="url(#b1)">
<ellipse cx="154" cy="60" rx="2.500" ry="3.500" fill="#ff6a2a"/>
<path d="M56 142c6-18 16-28 30-32" stroke="#e8eef0" stroke-width="2" fill="none"/>
<rect x="0" y="130" width="10" height="12" fill="#9a9c98"/>
</g></svg></div>
<div class="a th" id="p-t5" style="left:1943px;top:1074px;width:213px;height:142px;background:#567"><svg width="213" height="142" viewBox="0 0 213 142">
<rect width="213" height="142" fill="#6d7078"/>
<g filter="url(#b1)">
<rect width="213" height="13" fill="#2a1f1c"/>
<path d="M0 13h213v32H0z" fill="#8a8682"/>
<path d="M0 45c40-30 150-34 213-6v8H0z" fill="#5a6072"/>
<rect x="0" y="45" width="72" height="76" fill="#1c5ed6"/>
<rect x="0" y="100" width="72" height="21" fill="#3a86e8"/>
<path d="M36 50l3 12 9-8-4 11 12-2-9 8 10 6-12 1 5 11-10-6-3 12-4-12-10 7 5-11-12-1 10-6-9-8 12 2-4-11 9 8z" fill="#f4f8ff"/>
<circle cx="36" cy="73" r="7" fill="#2a6ad8"/>
<rect x="4" y="100" width="64" height="4" fill="#dfe8ff" opacity=".8"/><rect x="12" y="108" width="30" height="4" fill="#dfe8ff" opacity=".8"/>
<rect x="128" y="45" width="44" height="72" fill="#e8d04a"/>
<rect x="128" y="45" width="44" height="20" fill="#9acb4a"/>
<rect x="150" y="62" width="18" height="20" fill="#3a9ad8"/><rect x="150" y="86" width="20" height="28" fill="#f4f0e0"/><rect x="134" y="92" width="16" height="18" fill="#f4a02a"/>
<rect x="176" y="45" width="37" height="72" fill="#fdfdfd"/>
<rect x="172" y="45" width="4" height="97" fill="#1a1a1e"/><rect x="120" y="117" width="93" height="4" fill="#1a1a1e"/>
<rect x="120" y="121" width="52" height="21" fill="#2ab0e0"/><rect x="176" y="121" width="37" height="21" fill="#2a9ad8"/>
<rect x="182" y="127" width="28" height="5" fill="#e8f4ff" opacity=".85"/>
<!-- shirt -->
<path d="M0 124c20-12 50-18 70-20l60 18 24 20H0z" fill="#a9abae"/>
<path d="M62 108c10 14 40 22 66 10l-6-16z" fill="#c99a80"/>
<!-- head -->
<path d="M66 70c0-40 20-52 50-52 28 0 40 18 38 50-2 34-16 58-42 60-24 0-46-24-46-58z" fill="#dca98a"/>
<path d="M60 78c-6-40 14-70 56-72 34 0 46 24 42 56-8-22-24-36-40-36-22 4-38 14-46 32-4 8-8 14-12 20z" fill="#17141a"/>
<ellipse cx="68" cy="84" rx="7" ry="11" fill="#d09a7c"/>
<circle cx="113" cy="80" r="13" fill="none" stroke="#2a2a2e" stroke-width="1.800"/><circle cx="146" cy="83" r="12" fill="none" stroke="#2a2a2e" stroke-width="1.800"/><path d="M126 80l8 1M100 78l-22-6" stroke="#2a2a2e" stroke-width="1.600"/>
<path d="M104 80h16M138 83h14" stroke="#3a2a24" stroke-width="2"/>
<path d="M102 110c12 4 24 4 36-2-4 12-12 16-20 16-8-2-14-6-16-14z" fill="#7a3a30"/>
<path d="M106 112c10 3 20 3 28-1l-2 5c-8 3-16 3-24 0z" fill="#f4ecd8"/>
</g></svg></div>
<div class="a th" id="p-t6" style="left:1991px;top:1279px;width:118px;height:125px;background:#fff"><svg width="118" height="120" viewBox="0 0 118 120">
<g filter="url(#b1)" stroke="#7a5a48" stroke-width=".8">
<!-- mother -->
<path d="M70 22c0-16 40-20 44 0 2 14-4 22-8 24l-30 0c-6-6-6-14-6-24z" fill="#dcc48e"/>
<path d="M76 26c4-6 26-8 32 0 2 10-2 20-14 22-12 0-20-8-18-22z" fill="#fdf6f0"/>
<path d="M78 50c8-4 22-4 30 0 8 10 8 30 4 40l2 26H72l4-26c-6-12-4-30 2-40z" fill="#e9e58c"/>
<path d="M74 78h10v16H74z" fill="#8a9ad8"/><path d="M100 92h10v12h-10z" fill="#6a9a6a"/><ellipse cx="109" cy="76" rx="4" ry="8" fill="#8a9ad8"/>
<circle cx="79" cy="35" r="2.500" fill="#f4c0d0" stroke="none"/><circle cx="101" cy="35" r="2.500" fill="#f4c0d0" stroke="none"/>
<!-- girl -->
<path d="M8 62c2-14 28-16 32 0 2 12-6 20-16 20-10 0-18-8-16-20z" fill="#fdf6f0"/>
<path d="M4 60c2-18 34-22 38-2-8-8-22-6-30 4l-2 10c-6-2-8-8-6-12z" fill="#e0a890"/>
<path d="M14 84c6-4 18-4 24 0l2 32H10z" fill="#e9e58c"/>
<path d="M12 86h6l-4 30h-6zM34 84h4l2 32h-6z" fill="#9a6ac0"/>
<path d="M12 84c-2-6 4-8 8-6M38 84c4-4 8 0 10 4" fill="#8a9ad8"/>
<path d="M40 92l14-8" stroke="#c9a890" stroke-width="3"/>
<path d="M52 72l10-8 6 4-8 18-8-4z" fill="#5a6a6a"/>
<circle cx="36" cy="70" r="2.500" fill="#f4c0d0" stroke="none"/>
</g></svg></div>
<div class="a" style="left:2568px;top:287px;width:300px;height:79px;background:#f8f8f8;border-bottom:2px solid #5a5a5a"></div>
<div class="a" style="left:2268px;top:286px;width:300px;height:80px;border:2px solid #4a4a4a;border-bottom:none;border-radius:9px 9px 0 0;background:#fff"></div>
<div class="a jx" style="left:2320px;top:306px;font-size:30px;line-height:44px;font-weight:bold;white-space:nowrap;color:#1a1a1a"><span class="j" style="width:183px"><u class="g r2">速報</u>ニュース</span></div>
<svg class="a" style="left:2512px;top:314px" width="22" height="28" viewBox="0 0 22 28" fill="none" stroke="#1a1a1a" stroke-width="3.400"><path d="M5 4l10 10-10 10"/></svg>
<div class="a jx" style="left:2627px;top:306px;font-size:30px;line-height:44px;white-space:nowrap;color:#444"><span class="j" style="width:184px"><u class="r o2">最新</u>コメント</span></div>
<svg class="a" style="left:2640px;top:296px" width="200" height="70" viewBox="2640 296 200 70"><g fill="#b3261e"><circle cx="2693" cy="313.500" r="6"/><circle cx="2815" cy="311" r="6"/><circle cx="2662" cy="352" r="6"/><circle cx="2692" cy="350" r="6.500"/></g><path d="M2662 351h30" stroke="#e8341c" stroke-width="3"/></svg>
<div class="a" style="left:2268px;top:362px;width:600px;height:14px;overflow:hidden"><i class="ul" style="left:148px;width:52px;background:#a86018"></i><i class="ul" style="left:228px;width:52px;background:#6cc234"></i><i class="ul" style="left:228px;top:8px;width:25px;background:#e8341c"></i><i class="ul" style="left:255px;top:8px;width:25px;background:#7c9a1c"></i><i class="ul" style="left:308px;width:52px;background:#7c9a1c"></i><i class="ul" style="left:334px;top:8px;width:26px;background:#e8341c"></i><i class="ul" style="left:388px;width:26px;background:#6cc234"></i><i class="ul" style="left:442px;width:52px;background:#a86018"></i></div>
<div class="a" id="newslist" style="left:2268px;top:380px;width:600px;height:337px;overflow:hidden">
<div class="nt jx" style="top:16px"><span class="j" style="width:88.7px">4<u class="g">時間</u>前</span></div>
<div class="nh jx" style="top:15px"><span class="j" style="width:444px"><u class="r r2">与野党</u>４<u class="b">党</u>が「<u class="r r2">給付</u><u class="r">付き</u><u class="g o2">税額</u><u class="r">控除</u>」協</span><span class="j" style="width:397px">議スタート　「<u class="r g2">進め方</u>」で<u class="r">隔たり</u></span></div>
<div class="nt jx" style="top:118px"><span class="j" style="width:88.7px">6<u class="g">時間</u>前</span></div>
<div class="nh jx" style="top:117px"><span class="j" style="width:449px">ギニアビサウ、<u class="o">軍</u><u class="r g2">幹部</u>が<u class="r">暫定</u><u class="g r2">大統領</u>就</span><span class="j" style="width:370px">任<u class="o">を</u><u class="r r2">宣言</u>　アフリカ<u class="r r2">連合</u><u class="o">は</u><u class="b r2">非難</u></span></div>
<div class="nt jx" style="top:220px"><span class="j" style="width:88.7px">8<u class="g">時間</u>前</span></div>
<div class="nh jx" style="top:219px"><span class="j" style="width:444px">香<u class="g">港</u>の<u class="r o2">大規模</u><u class="o o2">火災</u>、<u class="r">高</u><u class="o">市</u><u class="b r2">首相</u>「<u class="r">心</u><u class="o">を</u>痛</span><span class="j" style="width:374px">めて<u class="g">いる</u>」<u class="r">お</u><u class="o o2">見舞い</u>メッセージ</span></div>
<div class="nt jx" style="top:322px"><span class="j" style="width:88.7px">9<u class="g">時間</u>前</span></div>
<div class="nh jx" style="top:321px"><span class="j" style="width:452.5px">常陸宮さま、90歳の慶事に　リハビリ</span></div>
</div>
<div class="a" id="bk" style="left:2268px;top:750px;width:600px;height:1100px;border:2px solid #173993;border-radius:0;background:#fff;overflow:hidden">
<div class="a" style="left:-2px;top:-2px;width:600px;height:108px;background:#173993"></div>
<div class="a" style="left:19px;top:14px;font-size:58px;line-height:70px;font-weight:bold;color:#fff;letter-spacing:-2.200px;white-space:nowrap;transform:scaleX(.925);transform-origin:0 0" id="bklogo">Booking.com</div>
<svg class="a" style="left:526px;top:-2px" width="72" height="33" viewBox="0 0 72 33"><path d="M0 0h72v33H10A10 10 0 0 1 0 23z" fill="#7f9bc9" opacity=".75"/><path d="M36.500 0v33" stroke="#1a3a94" stroke-width="1.500"/><path d="M13 8l14 8.500-14 8.500" fill="none" stroke="#3ec0d8" stroke-width="2.600" stroke-linejoin="round"/><path d="M10 12v13" stroke="#3ec0d8" stroke-width="2.600"/><path d="M46 8l17 17M63 8l-17 17" stroke="#3ec0d8" stroke-width="2.600"/></svg>
<div class="a th" id="p-h1" style="left:12px;top:118px;width:250px;height:252px;border-radius:9px;background:#999"><svg class="a" style="left:0;top:0" width="250" height="252" viewBox="0 0 250 252">
<rect width="250" height="252" fill="#d67a62"/>
<g filter="url(#b3)">
<rect width="250" height="44" fill="#a4d8e6"/>
<path d="M0 0h250v14c-60 10-160 6-250 14z" fill="#c4e6ee"/>
<path d="M0 30h250v18H0z" fill="#d9c8a8"/>
<path d="M0 44h250v12H0z" fill="#9a8a5a"/>
<path d="M0 52h250v80H0z" fill="#d98a72"/>
<path d="M30 60c40-10 130-12 190 0l-10 50c-50 16-120 16-170 2z" fill="#6a9a5a"/>
<path d="M62 68c30-8 60-8 88 0 6 10 0 22-10 30-20 10-40 10-56 2-20-6-30-20-22-32z" fill="#5cc8e2"/>
<ellipse cx="108" cy="84" rx="14" ry="6" fill="#3a6a8a"/>
<path d="M56 72c-10 8-6 26 8 34l20 6c20 6 40 4 56-4l8-6" stroke="#f0c8b0" stroke-width="6" fill="none"/>
<path d="M0 60l40-6 10 30-50 20z" fill="#de6e58"/>
<path d="M190 58l60 4v50l-50-14z" fill="#d8705c"/>
<path d="M0 104l70 20 40 0 50-20 90 14v134H0z" fill="#d4745c"/>
<path d="M0 110l60 20-10 40-50 10z" fill="#e6b49a"/>
<path d="M150 108l60 4 10 30-60 10z" fill="#cfc0a8"/>
<path d="M60 120l50 4v36l-50-6z" fill="#e09078"/>
<path d="M0 180l90-30 100 10 60 40v52H0z" fill="#d66a50"/>
<path d="M100 150h60l10 60h-80z" fill="#e08a68"/>
<ellipse cx="138" cy="140" rx="12" ry="12" fill="#e0705a"/>
<ellipse cx="148" cy="178" rx="12" ry="8" fill="#e88a70"/>
<path d="M120 206l60-4 10 50h-62z" fill="#d2e4f0"/>
<path d="M100 200c10 20 20 30 30 52H90z" fill="#2a3a2a"/>
<path d="M176 200c20 10 40 20 74 24v28h-60z" fill="#5a6a4a"/>
<path d="M200 120c10 20 30 60 50 70v-70z" fill="#6a7a5a" opacity=".8"/>
<path d="M0 196l100 30v26H0z" fill="#c8604a"/>
<path d="M20 210c10 10 20 20 20 42H10z" fill="#4a6a3a"/>
</g></svg><svg class="a" style="left:0;top:0" width="40" height="38" viewBox="0 0 40 38"><path d="M0 8a8 8 0 0 1 8-8h32v28a10 10 0 0 1-10 10H0z" fill="#1a3a94"/><path d="M20 29c-6-4.500-10-8-10-12.500a5 5 0 0 1 10-2 5 5 0 0 1 10 2c0 4.500-4 8-10 12.500z" fill="none" stroke="#fff" stroke-width="2.400" stroke-linejoin="round"/></svg></div>
<div class="a" style="left:265px;top:131px;width:326px;text-align:center;font-weight:bold;font-size:35px;line-height:41px;color:#000;white-space:nowrap;-webkit-text-stroke:.6px #000">Swisstouch<br>Resort Marsa<br>Alam</div>
<div class="a" style="left:265px;top:291px;width:326px;text-align:center;font-weight:bold;font-size:58px;line-height:64px;color:#000;white-space:nowrap;letter-spacing:1.500px;-webkit-text-stroke:1px #000">€ 100</div>
<div class="a th" id="p-h2" style="left:12px;top:390px;width:250px;height:252px;border-radius:9px;background:#999"><svg class="a" style="left:0;top:0" width="250" height="252" viewBox="0 0 250 252">
<rect width="250" height="252" fill="#8a929c"/>
<g filter="url(#b3)">
<rect width="250" height="60" fill="#f0f0f4"/>
<path d="M0 60c30-20 60-40 90-36 30-6 50-18 70-24h90v110H0z" fill="#8c8892"/>
<path d="M40 40c20-10 50-10 70 10l-10 40H30z" fill="#9a96a0"/>
<path d="M150 10l14 50h-28zM186 0l20 70h-40zM224 10l20 80h-40zM70 70l14 50H56z" fill="#3a4a40"/>
<path d="M100 60l14 40H86z" fill="#46564c"/>
<path d="M0 70c20-6 30 0 40 20l30 20 30-10 20 20-40 40H0z" fill="#f2f4f8"/>
<path d="M0 80c10 0 16 10 14 30L0 120z" fill="#e8eaf0"/>
<path d="M100 110l30-10 30 6-20 20z" fill="#f4f6fa"/>
<path d="M70 150l60-36 70 0 50-30v80l-40 10-90-6z" fill="#3c424c"/>
<path d="M190 130l60-40v50l-50 16z" fill="#2e333c"/>
<path d="M90 156h110v50H96z" fill="#8a5a3a"/>
<path d="M96 160v50M130 160v46M160 160v50M190 160v50" stroke="#b87a4a" stroke-width="5"/>
<path d="M200 150l50-10v80l-44 6z" fill="#9a6a44"/>
<path d="M208 170h20v40h-20z" fill="#e8b060"/>
<path d="M100 176h90v36h-90z" fill="#9ab4bc" opacity=".85"/>
<path d="M0 150c20-10 40 0 60 20l30 20 20 30-30 32H0z" fill="#6e7884"/>
<path d="M0 140c10-4 20 0 24 10l-10 20-14 6z" fill="#f0f2f6"/>
<path d="M0 200c30-10 60 10 90 20l60 10 40 22H0z" fill="#5c6470"/>
<path d="M40 210l20-6 10 10-14 10zM90 226l16-4 8 10-14 6zM10 230l16-4 8 12-20 4z" fill="#e4e8ee"/>
<path d="M150 214l100 6v32H130z" fill="#d9dde4"/>
<path d="M150 210l100 20M170 206v30M200 212v30M230 220v30" stroke="#3a3632" stroke-width="3"/>
</g></svg><svg class="a" style="left:0;top:0" width="40" height="38" viewBox="0 0 40 38"><path d="M0 8a8 8 0 0 1 8-8h32v28a10 10 0 0 1-10 10H0z" fill="#1a3a94"/><path d="M20 29c-6-4.500-10-8-10-12.500a5 5 0 0 1 10-2 5 5 0 0 1 10 2c0 4.500-4 8-10 12.500z" fill="none" stroke="#fff" stroke-width="2.400" stroke-linejoin="round"/></svg></div>
<div class="a" style="left:265px;top:405px;width:326px;text-align:center;font-weight:bold;font-size:35px;line-height:40px;color:#000;white-space:nowrap;-webkit-text-stroke:.6px #000">Takaragawa<br>Onsen<br>Ousenkaku</div>
<div class="a" style="left:265px;top:564px;width:326px;text-align:center;font-weight:bold;font-size:58px;line-height:64px;color:#000;white-space:nowrap;letter-spacing:1.500px;-webkit-text-stroke:1px #000">€ 214</div>
<div class="a th" id="p-h3" style="left:12px;top:662px;width:250px;height:252px;border-radius:9px;background:#999"><svg class="a" style="left:0;top:0" width="250" height="252" viewBox="0 0 250 252">
<rect width="250" height="252" fill="#6a6e72"/>
<g filter="url(#b1)">
<rect width="250" height="62" fill="#3e4145"/>
<path d="M0 8h250" stroke="#9a9ea2" stroke-width="6"/>
<path d="M60 8l-20 54M150 8l10 54M210 8l30 54" stroke="#3a3c40" stroke-width="1.500"/>
<rect y="60" width="250" height="12" fill="#2c2d30"/>
<rect x="0" y="70" width="40" height="140" fill="#8a8e90"/>
<rect x="40" y="70" width="196" height="36" fill="#3a2c24"/>
<path d="M40 78h196v22l-30 12H70l-30-12z" fill="#4a3428"/>
<rect x="74" y="84" width="138" height="7" fill="#e8e4dc" opacity=".9"/>
<rect x="236" y="70" width="14" height="150" fill="#5a5e62"/>
<rect x="46" y="106" width="186" height="92" fill="#55575a"/>
<rect x="50" y="118" width="50" height="76" fill="#b4b0a8"/>
<rect x="58" y="120" width="12" height="70" fill="#d8d4cc"/><rect x="84" y="120" width="12" height="70" fill="#e4dcc8"/>
<rect x="104" y="118" width="40" height="78" fill="#a87e62"/>
<rect x="148" y="118" width="28" height="76" fill="#c4c8cc"/><rect x="150" y="130" width="22" height="40" fill="#e4e8ec"/>
<rect x="180" y="106" width="52" height="90" fill="#55585c"/><rect x="196" y="136" width="30" height="40" fill="#7a8088"/>
<path d="M0 200l46-6h190l14 6v52H0z" fill="#9aa0a4"/>
<path d="M0 216h250M0 234h250M60 196l-30 56M130 196v56M190 196l30 56" stroke="#868c90" stroke-width="1.200"/>
<rect x="102" y="196" width="46" height="5" fill="#1e1e20"/>
<path d="M4 130c6-20 20-30 26-10 10 10 12 40 6 70H8c-8-20-10-40-4-60z" fill="#7a946a"/>
<path d="M8 190c10-6 24-6 30 0l-2 30c-8 6-20 6-26 0z" fill="#eceae6"/>
<path d="M0 200c8-10 20-8 24 0l-2 14H0z" fill="#5aa04a"/>
<path d="M0 214h26l-4 16H0z" fill="#e4e2de"/>
<path d="M226 170h18c4 20 4 40-2 58h-14c-6-18-6-38-2-58z" fill="#e8e6e2"/>
<path d="M222 168c4-14 14-20 24-16l-8 18z" fill="#8a4a4a"/>
<path d="M236 216c6-6 12-4 14 0v14h-12z" fill="#5a9a4a"/>
</g></svg><svg class="a" style="left:0;top:0" width="40" height="38" viewBox="0 0 40 38"><path d="M0 8a8 8 0 0 1 8-8h32v28a10 10 0 0 1-10 10H0z" fill="#1a3a94"/><path d="M20 29c-6-4.500-10-8-10-12.500a5 5 0 0 1 10-2 5 5 0 0 1 10 2c0 4.500-4 8-10 12.500z" fill="none" stroke="#fff" stroke-width="2.400" stroke-linejoin="round"/></svg></div>
<div class="a" style="left:265px;top:698px;width:326px;text-align:center;font-weight:bold;font-size:33px;line-height:37.5px;color:#000;white-space:nowrap;-webkit-text-stroke:.6px #000">Miyako City<br>Osaka Hommachi</div>
<div class="a" style="left:265px;top:811px;width:326px;text-align:center;font-weight:bold;font-size:58px;line-height:64px;color:#000;white-space:nowrap;letter-spacing:1.500px;-webkit-text-stroke:1px #000">€ 202</div>
<div class="a th" id="p-h4" style="left:12px;top:933px;width:250px;height:252px;border-radius:9px;background:#999"><svg class="a" style="left:0;top:0" width="250" height="252" viewBox="0 0 250 252">
<rect width="250" height="252" fill="#18130f"/>
<g filter="url(#b1)">
<defs><linearGradient id="sky4" x1="0" y1="0" x2="0" y2="1"><stop offset="0" stop-color="#15110e"/><stop offset=".5" stop-color="#2a1d12"/><stop offset="1" stop-color="#5a3a1c"/></linearGradient></defs>
<rect x="44" width="206" height="120" fill="url(#sky4)"/>
<rect width="48" height="252" fill="#7c6e5c"/>
<path d="M6 0v252M18 0v252M30 0v252M42 0v252" stroke="#3e342a" stroke-width="4"/>
<path d="M12 0v252M24 0v252M36 0v252" stroke="#a89880" stroke-width="3"/>
<path d="M52 120V46h14v74zM70 120V56h12v64zM88 120V40h10v-6h6v6h8v80zM116 120V50h14v70zM134 120V34h5V24h4v10h6v86zM154 120V52h16v68zM174 120V42h14v78zM192 120V56h12v64zM208 120V48h14v72zM226 120V22h4V8h3v14h5v98zM240 120V52h10v68z" fill="#b87228"/>
<path d="M52 120V46h14v74zM88 120V40h24v80zM134 120V34h15v86zM174 120V42h14v78zM226 120V22h12v98z" fill="#d8923a" opacity=".7"/>
<path d="M54 50v70M58 50v70M62 50v70M72 60v60M78 60v60M91 44v76M96 44v76M102 44v76M108 44v76M119 54v66M125 54v66M137 38v82M143 38v82M157 56v64M163 56v64M177 46v74M183 46v74M195 60v60M200 60v60M211 52v68M217 52v68M229 26v94M234 26v94M244 56v64" stroke="#1a120c" stroke-width="2.200"/>
<path d="M50 62h200M50 74h200M50 86h200M50 98h200M50 110h200" stroke="#1a120c" stroke-width="2.500" opacity=".8"/>
<rect x="44" y="112" width="206" height="30" fill="#1e150e"/>
<path d="M86 98l62-2 62 2 4 154H82z" fill="#6c645c"/>
<path d="M148 96v156" stroke="#4a443e" stroke-width="2"/>
</g></svg><svg class="a" style="left:0;top:0" width="40" height="38" viewBox="0 0 40 38"><path d="M0 8a8 8 0 0 1 8-8h32v28a10 10 0 0 1-10 10H0z" fill="#1a3a94"/><path d="M20 29c-6-4.500-10-8-10-12.500a5 5 0 0 1 10-2 5 5 0 0 1 10 2c0 4.500-4 8-10 12.500z" fill="none" stroke="#fff" stroke-width="2.400" stroke-linejoin="round"/></svg></div>
<div class="a" style="left:265px;top:965px;width:326px;text-align:center;font-weight:bold;font-size:36px;line-height:42px;color:#000;white-space:nowrap;-webkit-text-stroke:.6px #000">Hotel Fiera<br>Wellness &amp; Spa</div>
<div class="a" style="left:265px;top:1086px;width:326px;text-align:center;font-weight:bold;font-size:58px;line-height:64px;color:#000;white-space:nowrap;letter-spacing:1.500px;-webkit-text-stroke:1px #000">€ 180</div>
</div>
<!--PAGE-->
<div class="a" style="left:112px;top:1814px;width:3080px;height:171px;background:#6a6a6a"></div>
<div class="a jx" id="ck" style="left:170px;top:1840px;font-size:31.550px;line-height:55.500px;color:#fff;white-space:nowrap;letter-spacing:-.18px"><span class="j" style="width:2601.4px"><u class="r">当</u>Ｗｅｂサイトの<u class="o b2">改善</u>のための<u class="b g2">分析</u><u class="g">や</u><u class="o">広告</u><u class="r">配信</u>・コンテンツ<u class="r r2">配信</u><u class="r">等</u>のため<u class="g">に</u>、Cookie<u class="g">や</u>Javascript<u class="r">等</u><u class="g">を</u><u class="o o2">使用</u>してアクセスデータ<u class="g">を</u><u class="r r2">取得</u>・<u class="b o2">利用</u>しています。これ<u class="r">以降</u>ページ<u class="g">を</u>遷移した</span><span class="j" style="width:2267px"><u class="o g2">場合</u>、Cookie<u class="r">等</u>の<u class="r">設定</u>・<u class="o o2">使用</u><u class="g">に</u><u class="r r2">同意</u>したこと<u class="g">に</u>なります。Cookie<u class="r">等</u>の<u class="r">設定</u>・<u class="o">使用</u>の<u class="r">詳細</u><u class="g">や</u>オプトアウト<u class="g">に</u>ついて<u class="g">は</u>、リンク<u class="o">から</u><u class="r">詳細</u><u class="o">を</u><u class="r">ご覧</u>く<u class="g">だ</u><u class="g">さ</u>い。　<span style="text-decoration:underline;text-decoration-thickness:2px;text-underline-offset:5px"><u class="r">詳細</u></span></span></div>
<div class="a" style="left:2800px;top:1860px;width:334px;height:79px;background:#4aa5d0;color:#fff;font-weight:bold;font-size:31px;line-height:79px;text-align:center">OK</div>
<div class="a" style="left:144px;top:1662px;width:944px;height:163px;border-radius:9px;background:rgba(0,0,0,.8);box-shadow:0 0 18px rgba(0,0,0,.25);overflow:hidden">
<div class="a jx" id="pop" style="left:19px;top:37px;font-size:23.700px;line-height:36.500px;color:#fff;white-space:nowrap"><span class="j" style="width:784px">ウェブサイトの<u class="r r2">利便</u><u class="r r2">性向</u><u class="g">上</u><u class="o">や</u><u class="o">広告</u><u class="b r2">配信</u>などのため、<u class="r r2">お客様</u>の<u class="b">閲覧</u><u class="b r2">履歴</u><u class="g">や</u></span><span class="j" style="width:782px"><u class="r o2">端末</u><u class="r b2">情報</u>など<u class="g">を</u><u class="b r2">外部</u>サービスで<u class="r o2">利用</u>しています。<u class="r">詳細</u><u class="g">は</u>「<span class="lk"><u class="r b2">利用者</u><u class="r r2">情報</u>の</span></span><span class="j" style="width:418px"><span class="lk"><u class="b r2">外部</u><u class="r r2">送信</u><u class="g">に</u>ついて</span>」<u class="g">を</u><u class="r">ご覧</u>く<u class="g">ださ</u>い。</span></div>
<div class="a" style="left:830px;top:20px;width:96px;height:62px;overflow:hidden"><div class="a" style="left:2px;top:3px;width:130px;height:55px;border:2px solid #fff;border-radius:9px;color:#fff;font-weight:bold;font-size:24px;line-height:49px;padding-left:22px;white-space:nowrap" id="cls"><span class="j" style="width:74px">閉じる</span></div></div>
<div class="a" style="left:832px;top:84px;width:26px;height:60px;overflow:hidden"><div class="a" style="left:-52px;top:2px;width:77px;height:56px;border:2px solid #fff;border-radius:9px"></div></div>
</div>
<!--OVERLAYS-->
</div>
<div class="a" id="edge"></div>
</body>
</html>
